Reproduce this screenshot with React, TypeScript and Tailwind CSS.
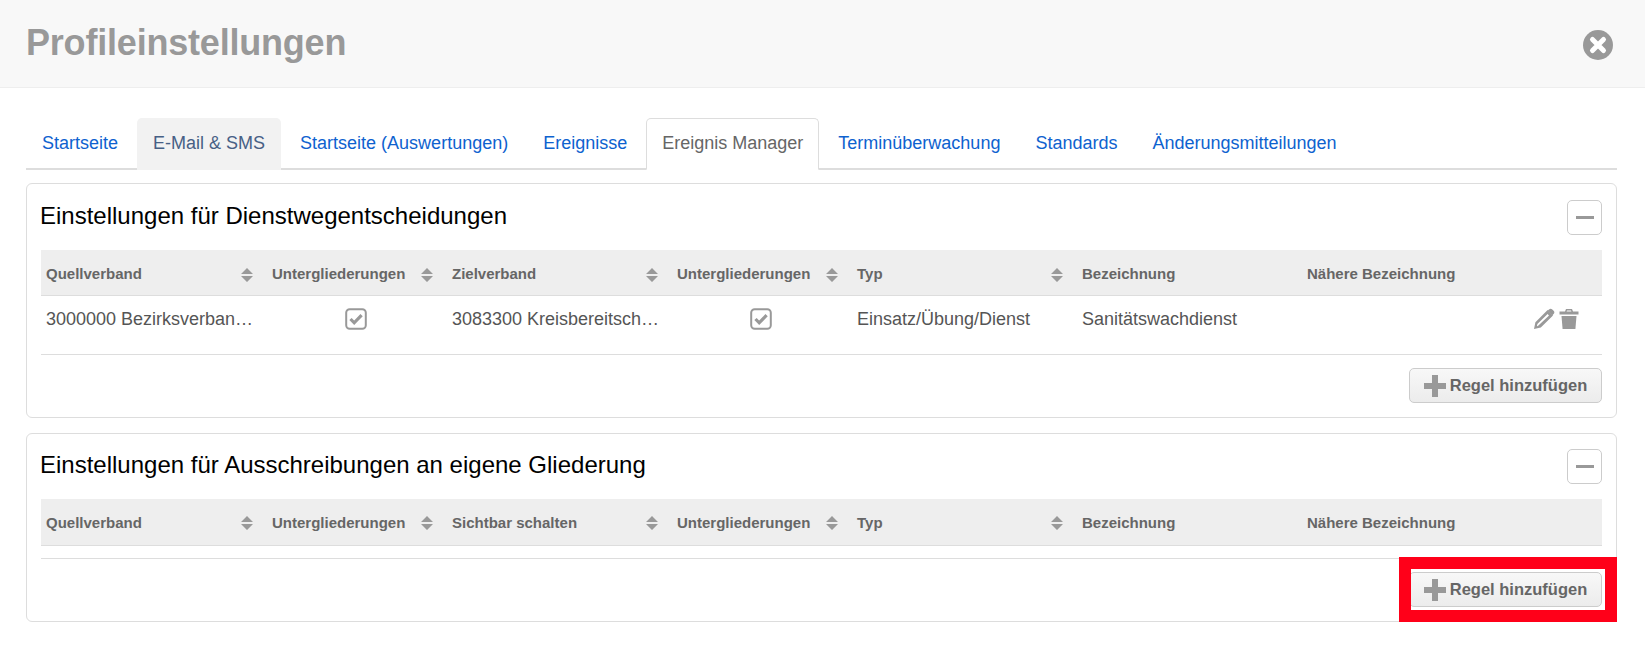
import React from 'react';

const font = "font-['Liberation_Sans',Arial,sans-serif]";
const cols = 'grid grid-cols-[226px_180px_225px_180px_225px_225px_225px_73px]';

const tabs = [
  { label: 'Startseite' },
  { label: 'E-Mail & SMS', hover: true },
  { label: 'Startseite (Auswertungen)' },
  { label: 'Ereignisse' },
  { label: 'Ereignis Manager', active: true },
  { label: 'Terminüberwachung' },
  { label: 'Standards' },
  { label: 'Änderungsmitteilungen' },
];

function SortIcon() {
  return (
    <svg width="14" height="16" viewBox="0 0 14 16" className="shrink-0">
      <path d="M7 1 L13 7 H1 Z M1 9 H13 L7 15 Z" fill="#999" />
    </svg>
  );
}

function CheckIcon() {
  return (
    <svg width="22" height="22" viewBox="0 0 22 22" className="mr-[2px]">
      <rect x="1.2" y="1.2" width="19.6" height="19.6" rx="3.5" fill="#fff" stroke="#999" strokeWidth="2" />
      <path d="M5.5 11 L9.2 14.8 L16.6 7.2" fill="none" stroke="#999" strokeWidth="3.2" />
    </svg>
  );
}

function PencilIcon() {
  return (
    <svg width="22" height="22" viewBox="0 0 22 22">
      <path
        d="M1 21 L2.4 14.2 L14.6 2 L20 7.4 L7.8 19.6 Z M4 17.9 L4.6 18.2 L16 7.4 L14.6 6 L4.4 16 Z"
        fill="#999"
        fillRule="evenodd"
      />
      <path d="M16 1.4 C17 .4 18.2 .4 19.3 1.4 L20.6 2.7 C21.6 3.8 21.6 5 20.6 6 L19.4 7.2 L14.8 2.6 Z" fill="#999" />
    </svg>
  );
}

function TrashIcon() {
  return (
    <svg width="20" height="22" viewBox="0 0 20 22">
      <path d="M7 1 H13 L14 3.5 H19.5 V6.5 H.5 V3.5 H6 Z M8 2.4 L7.6 3.5 H12.4 L12 2.4 Z" fill="#999" fillRule="evenodd" />
      <path d="M2.5 8 H17.5 L16.4 21 H3.6 Z" fill="#999" />
    </svg>
  );
}

function PlusIcon() {
  return (
    <svg width="22" height="22" viewBox="0 0 22 22" className="shrink-0">
      <path d="M8 0 H14 V8 H22 V14 H14 V22 H8 V14 H0 V8 H8 Z" fill="#999" />
    </svg>
  );
}

function AddButton({ marked }: { marked?: boolean }) {
  return (
    <div className="relative">
      <button className="flex h-[35px] w-[193px] items-center justify-center gap-[4px] rounded-[5px] border border-[#ccc] bg-gradient-to-b from-[#f8f8f8] to-[#ececec] text-[16.5px] font-bold text-[#666]">
        <PlusIcon />
        Regel hinzufügen
      </button>
      {marked && <div className="absolute -bottom-[15px] -left-[10px] -right-[15px] -top-[15px] border-[12px] border-[#ff0019]" />}
    </div>
  );
}

function Panel({
  title,
  headers,
  row,
  className,
}: {
  title: string;
  headers: string[];
  row?: string[];
  className: string;
}) {
  return (
    <section className={`rounded-[6px] border border-[#ddd] px-[14px] ${className}`}>
      <div className={`flex items-center justify-between ${row ? 'h-[66px]' : 'h-[65px]'}`}>
        <h2 className={`text-[24px] leading-none text-black ${row ? '-mt-[2px] -ml-[1px]' : '-mt-[3px] -ml-[1px]'}`}>{title}</h2>
        <button className="flex h-[35px] w-[35px] items-center justify-center rounded-[5px] border border-[#ccc] bg-white">
          <span className="h-[3px] w-[18px] bg-[#999]" />
        </button>
      </div>
      <div className={`${cols} ${row ? 'h-[46px] pt-[4px]' : 'h-[47px] pt-[2px]'} items-center border-b border-[#ddd] bg-[#eee] text-[15px] font-bold text-[#666]`}>
        {headers.map((h, i) => (
          <div key={i} className="flex items-center justify-between pl-[5px] pr-[13px]">
            <span>{h}</span>
            {i < 5 && <SortIcon />}
          </div>
        ))}
      </div>
      {row && (
        <div className={`${cols} h-[46px] items-center text-[18px] text-[#555]`}>
          <div className="pl-[5px]">{row[0]}</div>
          <div className="flex justify-center"><CheckIcon /></div>
          <div className="pl-[5px]">{row[1]}</div>
          <div className="flex justify-center"><CheckIcon /></div>
          <div className="pl-[5px]">{row[2]}</div>
          <div className="pl-[5px]">{row[3]}</div>
          <div />
          <div className="flex items-center justify-end gap-[4px] pr-[21px]">
            <PencilIcon />
            <TrashIcon />
          </div>
        </div>
      )}
      <div className="mt-[12px] flex justify-end border-t border-[#ddd] pb-[14px] pt-[13px]">
        <AddButton marked={!row} />
      </div>
    </section>
  );
}

export default function App() {
  return (
    <div className={`${font} h-[648px] w-[1645px] overflow-hidden bg-white`}>
      <header className="flex h-[88px] items-center justify-between border-b border-[#eee] bg-[#f8f8f8] pl-[26px] pr-[32px]">
        <h1 className="-mt-[2px] text-[36px] font-bold tracking-[-0.2px] text-[#999]">Profileinstellungen</h1>
        <svg width="30" height="30" viewBox="0 0 30 30" className="mt-[2px]">
          <circle cx="15" cy="15" r="15" fill="#999" />
          <path d="M9.5 9.5 L20.5 20.5 M20.5 9.5 L9.5 20.5" stroke="#fff" strokeWidth="5" strokeLinecap="round" />
        </svg>
      </header>
      <main className="pl-[26px] pr-[28px] pt-[30px]">
        <nav className="flex h-[52px] gap-[3px] border-b-2 border-[#ddd] text-[18px]">
          {tabs.map((t) => (
            <a
              key={t.label}
              className={`-mb-[2px] flex h-[52px] items-center rounded-t-[5px] border px-[15px] pb-[2px] ${
                t.active
                  ? 'border-[#ddd] border-b-white bg-white text-[#666]'
                  : t.hover
                    ? 'border-transparent bg-[#f2f2f2] text-[#476085]'
                    : 'border-transparent text-[#0e62cf]'
              }`}
            >
              {t.label}
            </a>
          ))}
        </nav>
        <Panel
          className="mt-[13px]"
          title="Einstellungen für Dienstwegentscheidungen"
          headers={['Quellverband', 'Untergliederungen', 'Zielverband', 'Untergliederungen', 'Typ', 'Bezeichnung', 'Nähere Bezeichnung', '']}
          row={['3000000 Bezirksverban…', '3083300 Kreisbereitsch…', 'Einsatz/Übung/Dienst', 'Sanitätswachdienst']}
        />
        <Panel
          className="mt-[15px]"
          title="Einstellungen für Ausschreibungen an eigene Gliederung"
          headers={['Quellverband', 'Untergliederungen', 'Sichtbar schalten', 'Untergliederungen', 'Typ', 'Bezeichnung', 'Nähere Bezeichnung', '']}
        />
      </main>
    </div>
  );
}
